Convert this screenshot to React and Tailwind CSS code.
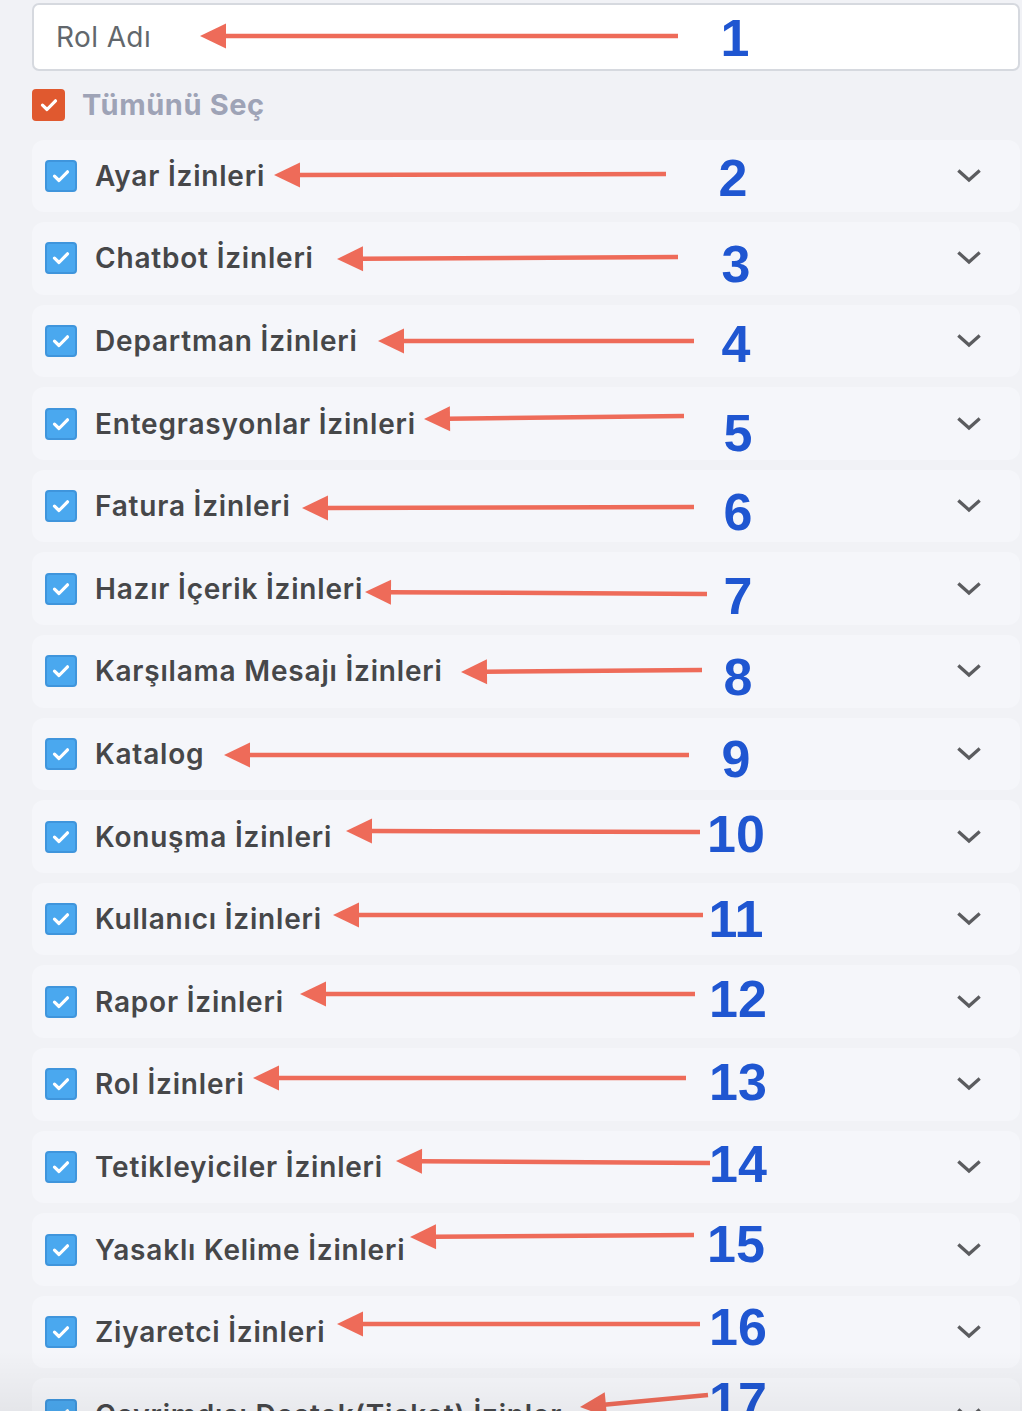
import React from "react";

const rows = [
  "Ayar İzinleri",
  "Chatbot İzinleri",
  "Departman İzinleri",
  "Entegrasyonlar İzinleri",
  "Fatura İzinleri",
  "Hazır İçerik İzinleri",
  "Karşılama Mesajı İzinleri",
  "Katalog",
  "Konuşma İzinleri",
  "Kullanıcı İzinleri",
  "Rapor İzinleri",
  "Rol İzinleri",
  "Tetikleyiciler İzinleri",
  "Yasaklı Kelime İzinleri",
  "Ziyaretci İzinleri",
  "Çevrimdışı Destek(Ticket) İzinler",
];

// tipX, tipY, endX, endY, numCx, numBaseline
const notes = [
  [200, 36, 678, 36, 735, 56],
  [274, 175, 666, 174, 733, 196],
  [337, 259, 678, 257, 736, 282],
  [378, 341, 694, 341, 736, 362],
  [424, 419, 684, 416, 738, 451],
  [302, 508, 694, 507, 738, 530],
  [365, 592, 707, 594, 738, 614],
  [461, 672, 702, 670, 738, 695],
  [224, 755, 689, 755, 736, 777],
  [346, 831, 700, 832, 736, 852],
  [333, 915, 703, 915, 736, 937],
  [300, 994, 695, 994, 738, 1017],
  [253, 1078, 686, 1078, 738, 1100],
  [396, 1161, 710, 1163, 738, 1182],
  [410, 1237, 694, 1235, 736, 1262],
  [337, 1324, 700, 1324, 738, 1345],
  [580, 1407, 708, 1395, 738, 1419],
];

function Check() {
  return (
    <svg width="18" height="14" viewBox="0 0 18 14" fill="none">
      <path d="M2.5 7.2 L7 11.5 L15.5 2.8" stroke="white" strokeWidth="3.2" strokeLinecap="round" strokeLinejoin="round" />
    </svg>
  );
}

function Arrow({ n }) {
  const [tx, ty, ex, ey] = n;
  const dx = ex - tx;
  const dy = ey - ty;
  const len = Math.sqrt(dx * dx + dy * dy);
  const ux = dx / len;
  const uy = dy / len;
  const hl = 26;
  const hw = 12.5;
  const bx = tx + ux * hl;
  const by = ty + uy * hl;
  const px = -uy;
  const py = ux;
  const pts = `${tx},${ty} ${bx + px * hw},${by + py * hw} ${bx - px * hw},${by - py * hw}`;
  return (
    <g>
      <line x1={bx - ux * 2} y1={by - uy * 2} x2={ex} y2={ey} stroke="#ee6b59" strokeWidth="4.5" />
      <polygon points={pts} fill="#ee6b59" />
    </g>
  );
}

export default function App() {
  return (
    <div className="relative h-[1411px] w-full overflow-hidden bg-[#f1f2f6] font-['Inter',sans-serif]">
      <div className="flex flex-col pl-[32px] pr-[2px] pt-[3px]">
        <div className="flex h-[68px] items-center rounded-[7px] border-2 border-[#d6d9df] bg-white pl-[22px] text-[28px] tracking-[0.4px] text-[#62676c]">
          Rol Adı
        </div>
        <div className="mt-[12px] flex items-center gap-[17px]">
          <div className="flex h-[32px] w-[33px] items-center justify-center rounded-[4px] bg-[#e0592f]">
            <Check />
          </div>
          <span className="text-[29px] font-bold tracking-[0.6px] text-[#9ea3b6]">Tümünü Seç</span>
        </div>
        <div className="mt-[13px] flex flex-col gap-[10px]">
          {rows.map((r) => (
            <div key={r} className="flex h-[72.6px] shrink-0 items-center rounded-[12px] bg-[#f5f6fa] pl-[13px] pr-[39px]">
              <div className="flex h-[32px] w-[32px] items-center justify-center rounded-[4px] border-2 border-[#3f95dc] bg-[#4aa8ef]">
                <Check />
              </div>
              <span className="ml-[18px] flex-1 whitespace-nowrap text-[28px] font-semibold tracking-[0.8px] text-[#464749]">{r}</span>
              <svg width="24" height="14" viewBox="0 0 24 14" fill="none">
                <path d="M2.5 2.5 L12 11 L21.5 2.5" stroke="#5b5c5f" strokeWidth="3.2" strokeLinecap="square" />
              </svg>
            </div>
          ))}
        </div>
      </div>
      <svg className="pointer-events-none absolute left-0 top-0" width="1022" height="1411" viewBox="0 0 1022 1411">
        {notes.map((n, i) => (
          <g key={i}>
            <Arrow n={n} />
            <text
              x={n[4]}
              y={n[5]}
              textAnchor="middle"
              fontFamily="'Liberation Sans', Arial, sans-serif"
              fontWeight="700"
              fontSize="52"
              fill="#1f56d1"
            >
              {i + 1}
            </text>
          </g>
        ))}
      </svg>
      <div className="pointer-events-none absolute bottom-0 left-0 h-[60px] w-full bg-linear-to-b from-transparent to-[rgba(0,0,0,0.05)]" />
    </div>
  );
}
